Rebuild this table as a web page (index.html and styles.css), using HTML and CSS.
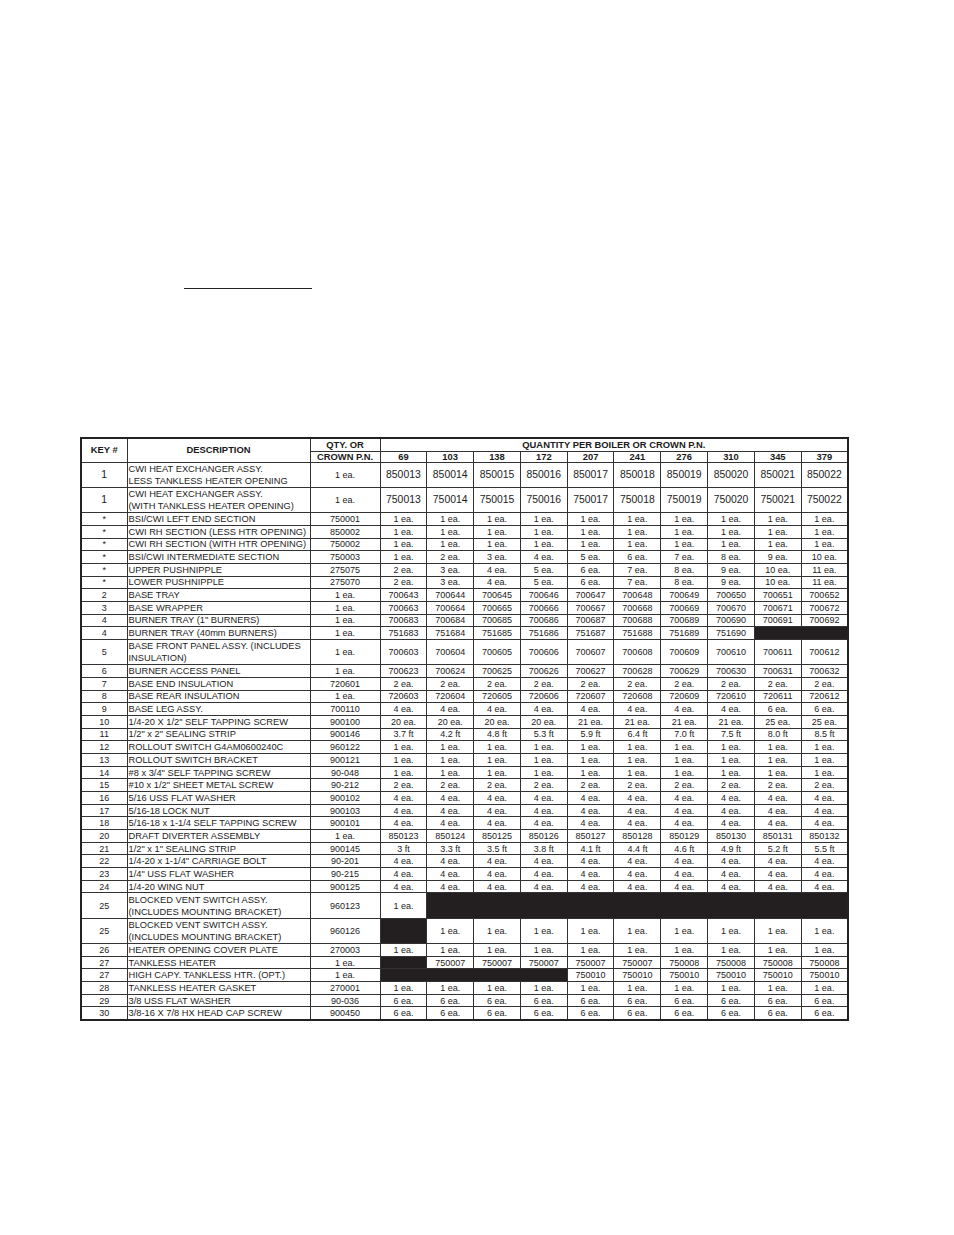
FILE: index.html
```html
<!DOCTYPE html>
<html>
<head>
<meta charset="utf-8">
<title>Parts List</title>
<link rel="stylesheet" href="styles.css">
</head>
<body>
<div class="page">
  <div class="rule"></div>
  <table class="parts">
    <colgroup>
      <col class="c-key"><col class="c-desc"><col class="c-qty">
      <col class="c-n"><col class="c-n"><col class="c-n"><col class="c-n"><col class="c-n">
      <col class="c-n"><col class="c-n"><col class="c-n"><col class="c-n"><col class="c-n">
    </colgroup>
    <thead>
      <tr class="h1">
        <th rowspan="2">KEY #</th>
        <th rowspan="2">DESCRIPTION</th>
        <th>QTY. OR</th>
        <th colspan="10">QUANTITY PER BOILER OR CROWN P.N.</th>
      </tr>
      <tr class="h2">
        <th>CROWN P.N.</th>
        <th>69</th><th>103</th><th>138</th><th>172</th><th>207</th><th>241</th><th>276</th><th>310</th><th>345</th><th>379</th>
      </tr>
    </thead>
    <tbody>
      <tr class="big lg"><td>1</td><td class="d">CWI HEAT EXCHANGER ASSY.<br>LESS TANKLESS HEATER OPENING</td><td class="q">1 ea.</td><td>850013</td><td>850014</td><td>850015</td><td>850016</td><td>850017</td><td>850018</td><td>850019</td><td>850020</td><td>850021</td><td>850022</td></tr>
      <tr class="big lg"><td>1</td><td class="d">CWI HEAT EXCHANGER ASSY.<br>(WITH TANKLESS HEATER OPENING)</td><td class="q">1 ea.</td><td>750013</td><td>750014</td><td>750015</td><td>750016</td><td>750017</td><td>750018</td><td>750019</td><td>750020</td><td>750021</td><td>750022</td></tr>
      <tr><td>*</td><td class="d">BSI/CWI LEFT END SECTION</td><td>750001</td><td>1 ea.</td><td>1 ea.</td><td>1 ea.</td><td>1 ea.</td><td>1 ea.</td><td>1 ea.</td><td>1 ea.</td><td>1 ea.</td><td>1 ea.</td><td>1 ea.</td></tr>
      <tr><td>*</td><td class="d">CWI RH SECTION (LESS HTR OPENING)</td><td>850002</td><td>1 ea.</td><td>1 ea.</td><td>1 ea.</td><td>1 ea.</td><td>1 ea.</td><td>1 ea.</td><td>1 ea.</td><td>1 ea.</td><td>1 ea.</td><td>1 ea.</td></tr>
      <tr><td>*</td><td class="d">CWI RH SECTION (WITH HTR OPENING)</td><td>750002</td><td>1 ea.</td><td>1 ea.</td><td>1 ea.</td><td>1 ea.</td><td>1 ea.</td><td>1 ea.</td><td>1 ea.</td><td>1 ea.</td><td>1 ea.</td><td>1 ea.</td></tr>
      <tr><td>*</td><td class="d">BSI/CWI INTERMEDIATE SECTION</td><td>750003</td><td>1 ea.</td><td>2 ea.</td><td>3 ea.</td><td>4 ea.</td><td>5 ea.</td><td>6 ea.</td><td>7 ea.</td><td>8 ea.</td><td>9 ea.</td><td>10 ea.</td></tr>
      <tr><td>*</td><td class="d">UPPER PUSHNIPPLE</td><td>275075</td><td>2 ea.</td><td>3 ea.</td><td>4 ea.</td><td>5 ea.</td><td>6 ea.</td><td>7 ea.</td><td>8 ea.</td><td>9 ea.</td><td>10 ea.</td><td>11 ea.</td></tr>
      <tr><td>*</td><td class="d">LOWER PUSHNIPPLE</td><td>275070</td><td>2 ea.</td><td>3 ea.</td><td>4 ea.</td><td>5 ea.</td><td>6 ea.</td><td>7 ea.</td><td>8 ea.</td><td>9 ea.</td><td>10 ea.</td><td>11 ea.</td></tr>
      <tr><td>2</td><td class="d">BASE TRAY</td><td>1 ea.</td><td>700643</td><td>700644</td><td>700645</td><td>700646</td><td>700647</td><td>700648</td><td>700649</td><td>700650</td><td>700651</td><td>700652</td></tr>
      <tr><td>3</td><td class="d">BASE WRAPPER</td><td>1 ea.</td><td>700663</td><td>700664</td><td>700665</td><td>700666</td><td>700667</td><td>700668</td><td>700669</td><td>700670</td><td>700671</td><td>700672</td></tr>
      <tr><td>4</td><td class="d">BURNER TRAY (1" BURNERS)</td><td>1 ea.</td><td>700683</td><td>700684</td><td>700685</td><td>700686</td><td>700687</td><td>700688</td><td>700689</td><td>700690</td><td>700691</td><td>700692</td></tr>
      <tr><td>4</td><td class="d">BURNER TRAY (40mm BURNERS)</td><td>1 ea.</td><td>751683</td><td>751684</td><td>751685</td><td>751686</td><td>751687</td><td>751688</td><td>751689</td><td>751690</td><td class="blk" colspan="2"></td></tr>
      <tr class="big"><td>5</td><td class="d">BASE FRONT PANEL ASSY. (INCLUDES<br>INSULATION)</td><td>1 ea.</td><td>700603</td><td>700604</td><td>700605</td><td>700606</td><td>700607</td><td>700608</td><td>700609</td><td>700610</td><td>700611</td><td>700612</td></tr>
      <tr><td>6</td><td class="d">BURNER ACCESS PANEL</td><td>1 ea.</td><td>700623</td><td>700624</td><td>700625</td><td>700626</td><td>700627</td><td>700628</td><td>700629</td><td>700630</td><td>700631</td><td>700632</td></tr>
      <tr><td>7</td><td class="d">BASE END INSULATION</td><td>720601</td><td>2 ea.</td><td>2 ea.</td><td>2 ea.</td><td>2 ea.</td><td>2 ea.</td><td>2 ea.</td><td>2 ea.</td><td>2 ea.</td><td>2 ea.</td><td>2 ea.</td></tr>
      <tr><td>8</td><td class="d">BASE REAR INSULATION</td><td>1 ea.</td><td>720603</td><td>720604</td><td>720605</td><td>720606</td><td>720607</td><td>720608</td><td>720609</td><td>720610</td><td>720611</td><td>720612</td></tr>
      <tr><td>9</td><td class="d">BASE LEG ASSY.</td><td>700110</td><td>4 ea.</td><td>4 ea.</td><td>4 ea.</td><td>4 ea.</td><td>4 ea.</td><td>4 ea.</td><td>4 ea.</td><td>4 ea.</td><td>6 ea.</td><td>6 ea.</td></tr>
      <tr><td>10</td><td class="d">1/4-20 X 1/2" SELF TAPPING SCREW</td><td>900100</td><td>20 ea.</td><td>20 ea.</td><td>20 ea.</td><td>20 ea.</td><td>21 ea.</td><td>21 ea.</td><td>21 ea.</td><td>21 ea.</td><td>25 ea.</td><td>25 ea.</td></tr>
      <tr><td>11</td><td class="d">1/2" x 2" SEALING STRIP</td><td>900146</td><td>3.7 ft</td><td>4.2 ft</td><td>4.8 ft</td><td>5.3 ft</td><td>5.9 ft</td><td>6.4 ft</td><td>7.0 ft</td><td>7.5 ft</td><td>8.0 ft</td><td>8.5 ft</td></tr>
      <tr><td>12</td><td class="d">ROLLOUT SWITCH G4AM0600240C</td><td>960122</td><td>1 ea.</td><td>1 ea.</td><td>1 ea.</td><td>1 ea.</td><td>1 ea.</td><td>1 ea.</td><td>1 ea.</td><td>1 ea.</td><td>1 ea.</td><td>1 ea.</td></tr>
      <tr><td>13</td><td class="d">ROLLOUT SWITCH BRACKET</td><td>900121</td><td>1 ea.</td><td>1 ea.</td><td>1 ea.</td><td>1 ea.</td><td>1 ea.</td><td>1 ea.</td><td>1 ea.</td><td>1 ea.</td><td>1 ea.</td><td>1 ea.</td></tr>
      <tr><td>14</td><td class="d">#8 x 3/4" SELF TAPPING SCREW</td><td>90-048</td><td>1 ea.</td><td>1 ea.</td><td>1 ea.</td><td>1 ea.</td><td>1 ea.</td><td>1 ea.</td><td>1 ea.</td><td>1 ea.</td><td>1 ea.</td><td>1 ea.</td></tr>
      <tr><td>15</td><td class="d">#10 x 1/2" SHEET METAL SCREW</td><td>90-212</td><td>2 ea.</td><td>2 ea.</td><td>2 ea.</td><td>2 ea.</td><td>2 ea.</td><td>2 ea.</td><td>2 ea.</td><td>2 ea.</td><td>2 ea.</td><td>2 ea.</td></tr>
      <tr><td>16</td><td class="d">5/16 USS FLAT WASHER</td><td>900102</td><td>4 ea.</td><td>4 ea.</td><td>4 ea.</td><td>4 ea.</td><td>4 ea.</td><td>4 ea.</td><td>4 ea.</td><td>4 ea.</td><td>4 ea.</td><td>4 ea.</td></tr>
      <tr><td>17</td><td class="d">5/16-18 LOCK NUT</td><td>900103</td><td>4 ea.</td><td>4 ea.</td><td>4 ea.</td><td>4 ea.</td><td>4 ea.</td><td>4 ea.</td><td>4 ea.</td><td>4 ea.</td><td>4 ea.</td><td>4 ea.</td></tr>
      <tr><td>18</td><td class="d">5/16-18 x 1-1/4 SELF TAPPING SCREW</td><td>900101</td><td>4 ea.</td><td>4 ea.</td><td>4 ea.</td><td>4 ea.</td><td>4 ea.</td><td>4 ea.</td><td>4 ea.</td><td>4 ea.</td><td>4 ea.</td><td>4 ea.</td></tr>
      <tr><td>20</td><td class="d">DRAFT DIVERTER ASSEMBLY</td><td>1 ea.</td><td>850123</td><td>850124</td><td>850125</td><td>850126</td><td>850127</td><td>850128</td><td>850129</td><td>850130</td><td>850131</td><td>850132</td></tr>
      <tr><td>21</td><td class="d">1/2" x 1" SEALING STRIP</td><td>900145</td><td>3 ft</td><td>3.3 ft</td><td>3.5 ft</td><td>3.8 ft</td><td>4.1 ft</td><td>4.4 ft</td><td>4.6 ft</td><td>4.9 ft</td><td>5.2 ft</td><td>5.5 ft</td></tr>
      <tr><td>22</td><td class="d">1/4-20 x 1-1/4" CARRIAGE BOLT</td><td>90-201</td><td>4 ea.</td><td>4 ea.</td><td>4 ea.</td><td>4 ea.</td><td>4 ea.</td><td>4 ea.</td><td>4 ea.</td><td>4 ea.</td><td>4 ea.</td><td>4 ea.</td></tr>
      <tr><td>23</td><td class="d">1/4" USS FLAT WASHER</td><td>90-215</td><td>4 ea.</td><td>4 ea.</td><td>4 ea.</td><td>4 ea.</td><td>4 ea.</td><td>4 ea.</td><td>4 ea.</td><td>4 ea.</td><td>4 ea.</td><td>4 ea.</td></tr>
      <tr><td>24</td><td class="d">1/4-20 WING NUT</td><td>900125</td><td>4 ea.</td><td>4 ea.</td><td>4 ea.</td><td>4 ea.</td><td>4 ea.</td><td>4 ea.</td><td>4 ea.</td><td>4 ea.</td><td>4 ea.</td><td>4 ea.</td></tr>
      <tr class="big"><td>25</td><td class="d">BLOCKED VENT SWITCH ASSY.<br>(INCLUDES MOUNTING BRACKET)</td><td>960123</td><td>1 ea.</td><td class="blk" colspan="9"></td></tr>
      <tr class="big"><td>25</td><td class="d">BLOCKED VENT SWITCH ASSY.<br>(INCLUDES MOUNTING BRACKET)</td><td>960126</td><td class="blk"></td><td>1 ea.</td><td>1 ea.</td><td>1 ea.</td><td>1 ea.</td><td>1 ea.</td><td>1 ea.</td><td>1 ea.</td><td>1 ea.</td><td>1 ea.</td></tr>
      <tr><td>26</td><td class="d">HEATER OPENING COVER PLATE</td><td>270003</td><td>1 ea.</td><td>1 ea.</td><td>1 ea.</td><td>1 ea.</td><td>1 ea.</td><td>1 ea.</td><td>1 ea.</td><td>1 ea.</td><td>1 ea.</td><td>1 ea.</td></tr>
      <tr><td>27</td><td class="d">TANKLESS HEATER</td><td>1 ea.</td><td class="blk"></td><td>750007</td><td>750007</td><td>750007</td><td>750007</td><td>750007</td><td>750008</td><td>750008</td><td>750008</td><td>750008</td></tr>
      <tr><td>27</td><td class="d">HIGH CAPY. TANKLESS HTR. (OPT.)</td><td>1 ea.</td><td class="blk" colspan="4"></td><td>750010</td><td>750010</td><td>750010</td><td>750010</td><td>750010</td><td>750010</td></tr>
      <tr><td>28</td><td class="d">TANKLESS HEATER GASKET</td><td>270001</td><td>1 ea.</td><td>1 ea.</td><td>1 ea.</td><td>1 ea.</td><td>1 ea.</td><td>1 ea.</td><td>1 ea.</td><td>1 ea.</td><td>1 ea.</td><td>1 ea.</td></tr>
      <tr><td>29</td><td class="d">3/8 USS FLAT WASHER</td><td>90-036</td><td>6 ea.</td><td>6 ea.</td><td>6 ea.</td><td>6 ea.</td><td>6 ea.</td><td>6 ea.</td><td>6 ea.</td><td>6 ea.</td><td>6 ea.</td><td>6 ea.</td></tr>
      <tr><td>30</td><td class="d">3/8-16 X 7/8 HX HEAD CAP SCREW</td><td>900450</td><td>6 ea.</td><td>6 ea.</td><td>6 ea.</td><td>6 ea.</td><td>6 ea.</td><td>6 ea.</td><td>6 ea.</td><td>6 ea.</td><td>6 ea.</td><td>6 ea.</td></tr>
    </tbody>
  </table>
</div>
</body>
</html>
```
FILE: styles.css
```css
html, body {
  margin: 0;
  padding: 0;
  background: #ffffff;
}

body {
  font-family: "Liberation Sans", Arial, sans-serif;
  color: #1c1c1c;
}

.page {
  padding-top: 288px;
  padding-bottom: 200px;
}

.rule {
  margin-left: 184px;
  width: 128px;
  height: 1px;
  background: #222222;
}

.parts {
  margin: 148px 0 0 80px;
  width: 768px;
  table-layout: fixed;
  border-collapse: collapse;
  border: 2px solid #222222;
}

.c-key { width: 46px; }
.c-desc { width: 183px; }
.c-qty { width: 70px; }
.c-n { width: 46.8px; }

.parts th,
.parts td {
  border: 1px solid #333333;
  padding: 0;
  text-align: center;
  vertical-align: middle;
  white-space: nowrap;
  overflow: hidden;
}

.parts th {
  font-size: 9.4px;
  font-weight: bold;
  line-height: 10px;
  color: #1a1a1a;
}

.parts .h1 { height: 13px; }
.parts .h2 { height: 11px; }

.parts td {
  font-size: 9px;
  line-height: 10px;
}

.parts tbody tr { height: 12.68px; }
.parts tbody tr.big { height: 25.36px; }

.parts td.d {
  text-align: left;
  padding-left: 1px;
  font-size: 9.3px;
}

.parts tr.big td.d { line-height: 12px; }

.parts tr.lg td { font-size: 10.4px; }
.parts tr.lg td.d { font-size: 9.3px; }
.parts tr.lg td.q { font-size: 9px; }

.parts td.blk {
  background: #231f20;
}
```
